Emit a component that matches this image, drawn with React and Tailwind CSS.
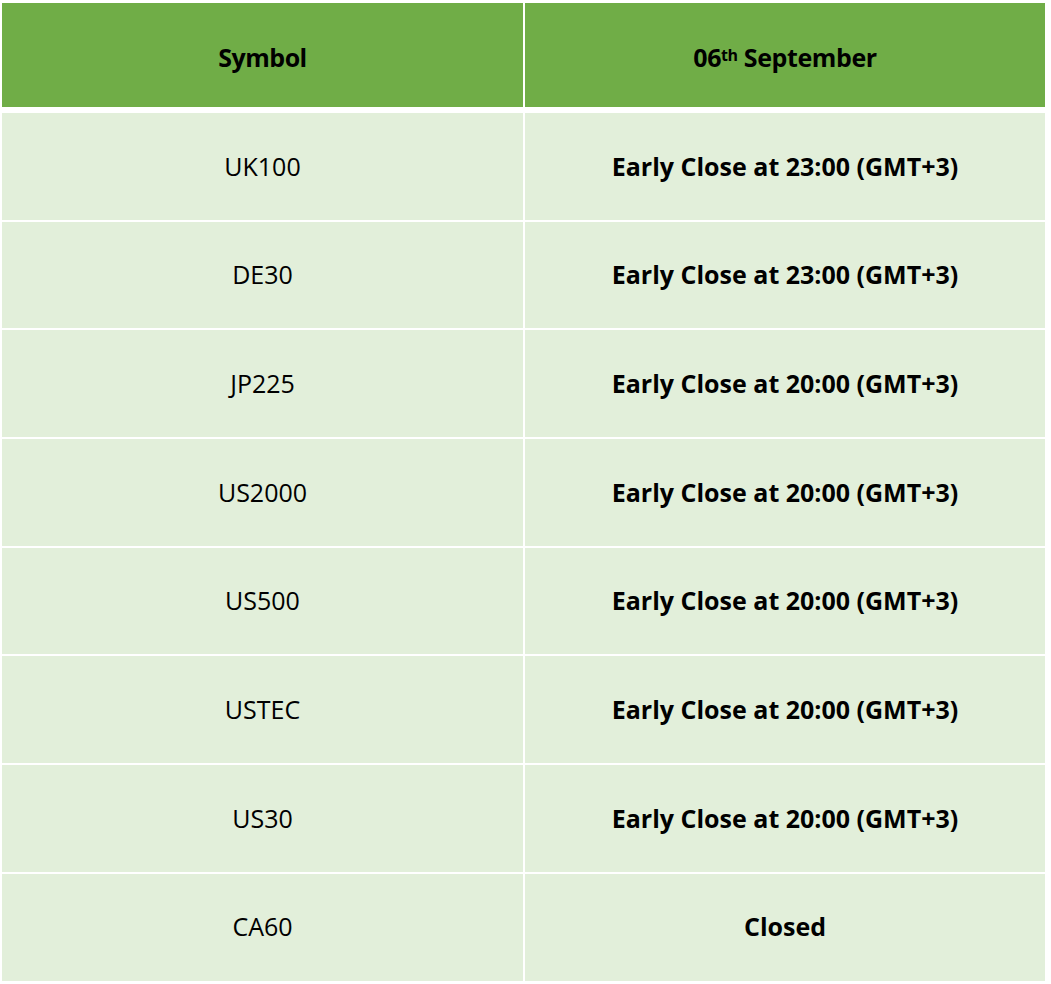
const rows = [
  { symbol: "UK100", status: "Early Close at 23:00 (GMT+3)" },
  { symbol: "DE30", status: "Early Close at 23:00 (GMT+3)" },
  { symbol: "JP225", status: "Early Close at 20:00 (GMT+3)" },
  { symbol: "US2000", status: "Early Close at 20:00 (GMT+3)" },
  { symbol: "US500", status: "Early Close at 20:00 (GMT+3)" },
  { symbol: "USTEC", status: "Early Close at 20:00 (GMT+3)" },
  { symbol: "US30", status: "Early Close at 20:00 (GMT+3)" },
  { symbol: "CA60", status: "Closed" },
];

export default function App() {
  return (
    <div className="min-h-[984px] w-[1051px] bg-white pl-[2px] pt-[3px] font-['Open_Sans',sans-serif] text-[25px] text-black">
      {/* header */}
      <div className="grid grid-cols-[521px_520px] gap-x-[2px]">
        <div className="flex h-[104px] items-center justify-center bg-[#70ad47] pt-[6px] font-bold tracking-[-0.5px]">
          Symbol
        </div>
        <div className="flex h-[104px] items-center justify-center bg-[#70ad47] pt-[6px] font-bold tracking-[-0.4px]">
          06<sup className="relative -top-[3px] text-[16px]">th</sup>&nbsp;September
        </div>
      </div>
      <div className="mt-[6px] flex flex-col gap-y-[2px]">
        {rows.map((r) => (
          <div key={r.symbol} className="grid grid-cols-[521px_520px] gap-x-[2px]">
            <div className="flex h-[106.7px] items-center justify-center bg-[#e2efda]">
              {r.symbol}
            </div>
            <div className="flex h-[106.7px] items-center justify-center bg-[#e2efda] font-bold">
              {r.status}
            </div>
          </div>
        ))}
      </div>
    </div>
  );
}
